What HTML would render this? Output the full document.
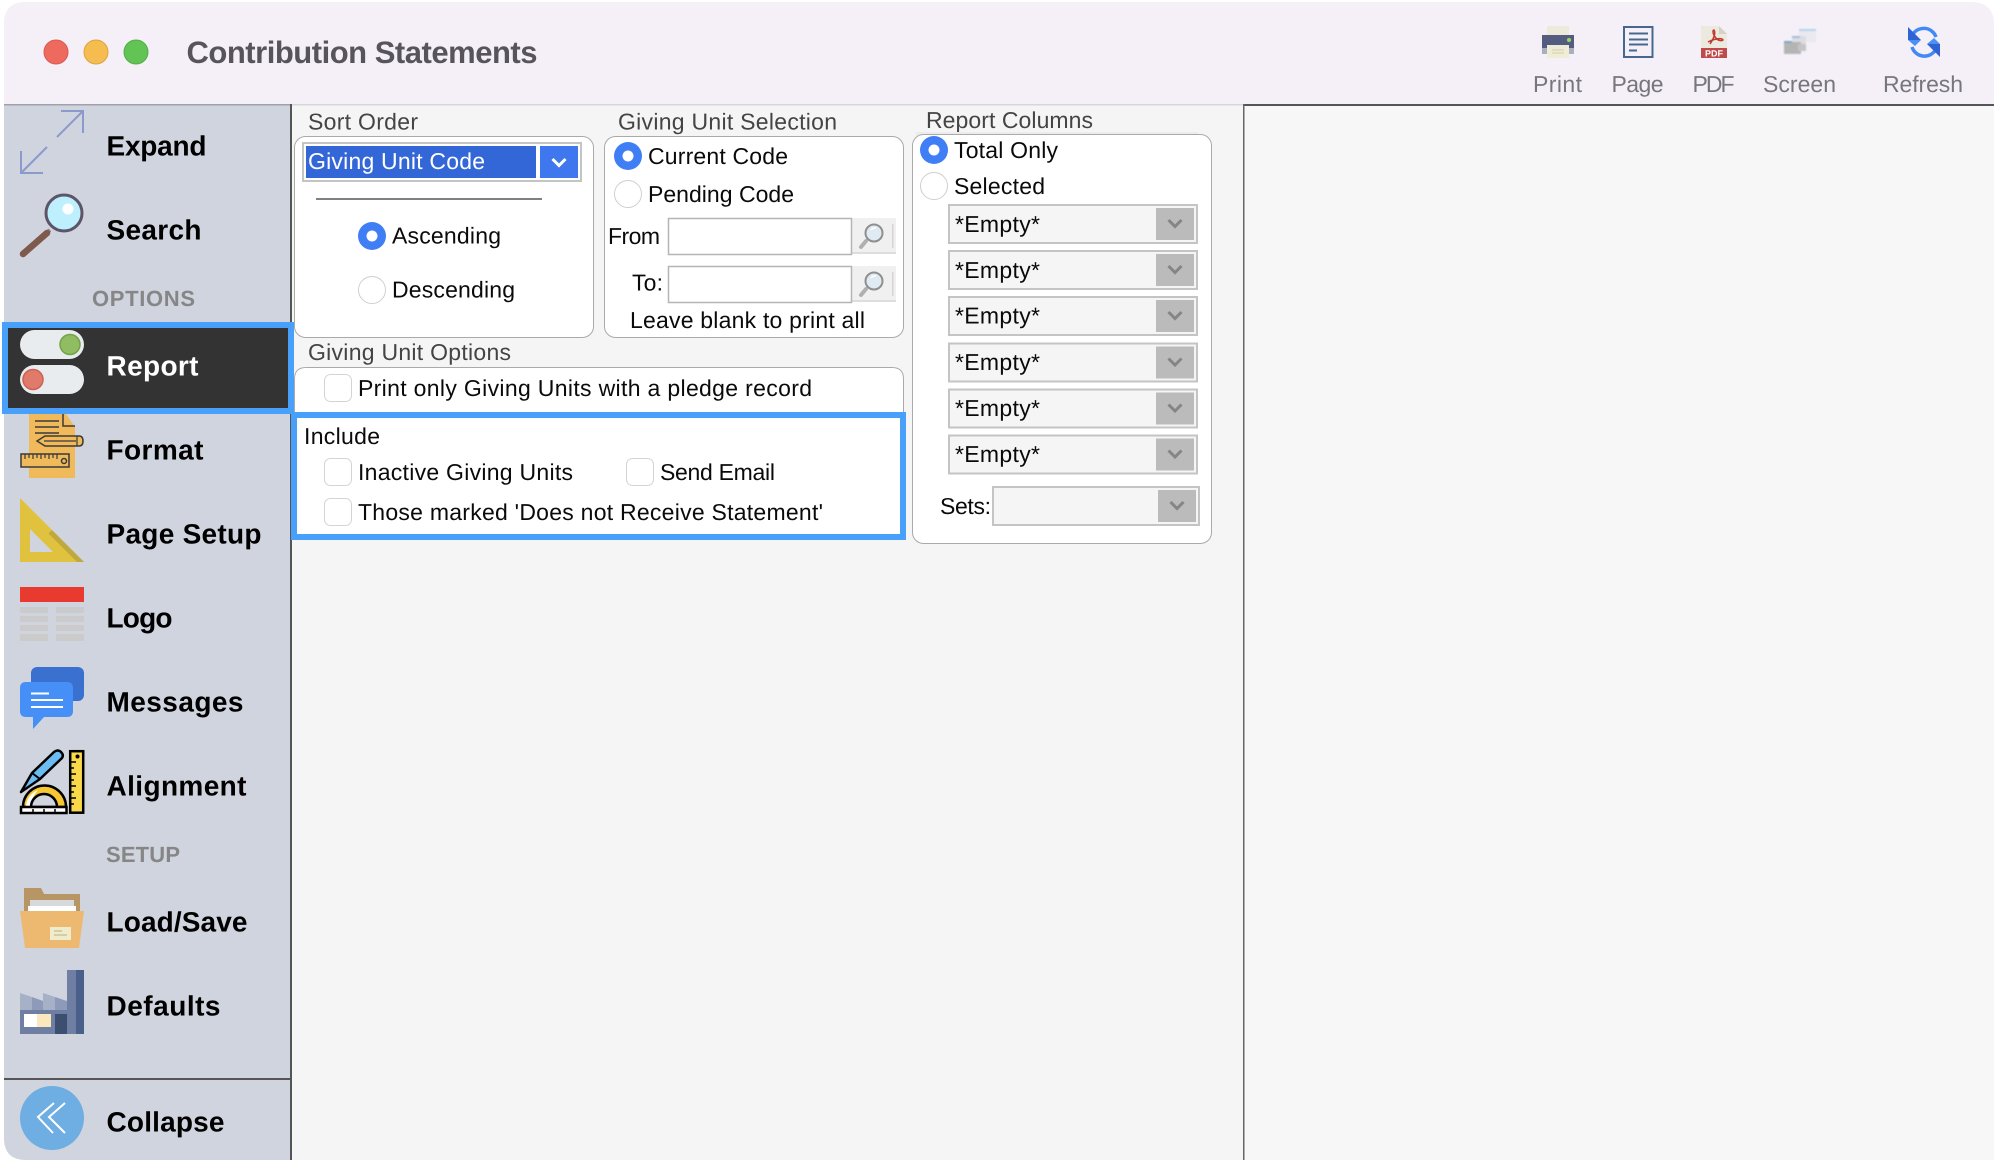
<!DOCTYPE html>
<html><head><meta charset="utf-8"><title>Contribution Statements</title>
<style>
html,body{margin:0;padding:0;background:#fff;width:1994px;height:1160px;overflow:hidden}
svg{display:block}
text{font-family:"Liberation Sans",Arial,sans-serif;font-size:23px;fill:#0a0a0a;text-rendering:geometricPrecision}
.s{font-size:28px;font-weight:700;fill:#000}
.h{font-size:22px;font-weight:700;fill:#868686}
.l{fill:#444}
.t{fill:#77777b}
</style></head><body>
<svg width="1994" height="1160" viewBox="0 0 1994 1160" xmlns="http://www.w3.org/2000/svg">
<defs>
<clipPath id="win"><path d="M4 24Q4 2 26 2H1970Q1994 2 1994 24V1160H26Q4 1160 4 1138Z"/></clipPath>
<filter id="b"><feGaussianBlur stdDeviation="0.7"/></filter>
<g id="chk"><rect x="0.5" y="0.5" width="27" height="27" rx="6" fill="#fff" stroke="#d4d4d4"/></g>
<g id="off"><circle r="13.5" fill="#fff" stroke="#cfcfcf"/></g>
<g id="on"><circle r="14" fill="#3f7ef5"/><circle r="5.5" fill="#fff"/></g>
<g id="dd"><rect x="1" y="1" width="248" height="38" fill="#f5f5f5" stroke="#c4c4c4" stroke-width="2"/><rect x="208" y="4" width="38" height="32" fill="#bbb"/><path d="M220.500 16L227 22.500 233.500 16" fill="none" stroke="#858585" stroke-width="3"/></g>
<g id="mag"><rect x="0" y="0" width="44" height="36" fill="#f0f0f0"/><rect x="0" y="34" width="44" height="2" fill="#ddd"/><rect x="40" y="6" width="1.500" height="24" fill="#d5d5d5"/><path d="M14 23L9 29" stroke="#b0b0b0" stroke-width="4" stroke-linecap="round"/><circle cx="22" cy="15" r="8.500" fill="#dfeaf3" stroke="#8f8f8f" stroke-width="2"/><path d="M19 12A5 5 0 0 1 24 10" fill="none" stroke="#fff" stroke-width="1.500"/></g>
</defs>
<g clip-path="url(#win)">
<rect x="0" y="0" width="1994" height="1160" fill="#f5f5f5"/>
<rect x="0" y="0" width="1994" height="104" fill="#f5f0f8"/>
<rect x="1243" y="104" width="751" height="1056" fill="#f7f7f7"/>
<rect x="292" y="104" width="951" height="1.500" fill="#d8d5da"/>
<rect x="1243" y="104" width="751" height="2" fill="#555"/>
<rect x="1243" y="104" width="1.500" height="1056" fill="#666"/>
<rect x="0" y="105" width="290" height="1055" fill="#d0d4de"/>
<rect x="0" y="104" width="290" height="1.500" fill="#a0a2aa"/>
<rect x="290" y="104" width="2" height="1056" fill="#555"/>
<rect x="0" y="1078" width="290" height="2" fill="#555"/>
</g>

<!-- title bar -->
<circle cx="56" cy="52" r="12" fill="#ee6a5f" stroke="#d9584e"/>
<circle cx="96" cy="52" r="12" fill="#f5bd4f" stroke="#dea43a"/>
<circle cx="136" cy="52" r="12" fill="#61c454" stroke="#52ad46"/>
<text x="186.500" y="63" textLength="351" style="font-size:31px;font-weight:700;fill:#58555a">Contribution Statements</text>

<!-- toolbar icons -->
<g>
<rect x="1547" y="26" width="22" height="10" fill="#ecead9"/>
<rect x="1542" y="47" width="32" height="7" fill="#a9b0bd"/>
<rect x="1542" y="35" width="32" height="13" fill="#545d80"/>
<rect x="1547" y="45" width="22" height="13" fill="#efedd6"/>
<path d="M1552 50H1564M1552 53H1564" stroke="#d3d0a8"/>
<circle cx="1569" cy="40" r="2" fill="#90dc60"/>
<rect x="1624" y="27" width="28.500" height="30" fill="none" stroke="#46678f" stroke-width="2"/>
<path d="M1629 33.500H1648M1629 39.500H1648M1629 44.500H1648M1629 50.500H1637" stroke="#46678f" stroke-width="2"/>
<path d="M1701 26H1719L1727 34V58H1701Z" fill="#ece9df"/><path d="M1719 26V34H1727Z" fill="#d5d2c6"/>
<rect x="1701" y="48" width="26" height="10" fill="#c0494a"/>
<text x="1714" y="56.500" text-anchor="middle" style="font-size:9px;font-weight:700;fill:#fff">PDF</text>
<path d="M1710 44C1714 38 1716 33 1714 30C1712 30 1713 35 1716 38C1718 41 1722 41 1723 40C1722 38 1716 38 1708 42" fill="none" stroke="#c0392f" stroke-width="1.500"/>
<g filter="url(#b)">
<rect x="1799" y="30" width="17" height="12" fill="#e9e9ee"/><rect x="1799" y="29" width="17" height="2" fill="#b4d2ee"/>
<rect x="1792" y="36" width="14" height="10" fill="#dcdde2"/><rect x="1792" y="36" width="8" height="2" fill="#9ebcdc"/>
<rect x="1784" y="42" width="17" height="12" fill="#b4b4b4"/><rect x="1784" y="41" width="8" height="2" fill="#7fa4c8"/>
<rect x="1798" y="44" width="8" height="7" fill="#c4c4c4"/>
</g>
<path d="M1913 34A13 13 0 0 1 1936 37M1936 49A13 13 0 0 1 1912 47" fill="none" stroke="#3f8af5" stroke-width="3.500"/>
<path d="M1908 27V40H1921Z" fill="#2f63d2"/><path d="M1908 40L1921 40 1915 46Z" fill="#4a90f5"/>
<path d="M1940 57V44H1927Z" fill="#2f63d2"/><path d="M1927 44H1940L1934 38Z" fill="#4a90f5"/>
</g>
<text class="t" x="1533" y="92" textLength="49">Print</text>
<text class="t" x="1611.500" y="92" textLength="52">Page</text>
<text class="t" x="1692.500" y="92" textLength="42">PDF</text>
<text class="t" x="1763" y="92" textLength="73">Screen</text>
<text class="t" x="1883" y="92" textLength="80">Refresh</text>

<!-- sidebar icons -->
<path d="M57 137L83 111M61 111H83V133M47 147L21 173M21 151V173H43" fill="none" stroke="#8c9acb" stroke-width="2"/>
<path d="M50 230L44 235" stroke="#8a8794" stroke-width="4"/>
<path d="M47 233L23 254" stroke="#7d5a4c" stroke-width="6.500" stroke-linecap="round"/>
<circle cx="64" cy="213" r="18" fill="#bdf0fc" stroke="#5c5468" stroke-width="3"/>
<circle cx="68" cy="209" r="5.500" fill="#fff"/>

<!-- Format icon -->
<path d="M29 410H63L75 427V478H29Z" fill="#f0b95a"/>
<path d="M63 412V426H75" fill="none" stroke="#3a3a3a" stroke-width="1.500"/>
<path d="M35 421H59M35 427H59M35 433H59" stroke="#3a3a3a" stroke-width="1.500"/>
<path d="M37 441L45 436H79Q83 436 83 441Q83 446 79 446H45Z" fill="#f0b95a" stroke="#3a3a3a" stroke-width="1.500"/>
<path d="M44 441H76M77 436V446" stroke="#3a3a3a" stroke-width="1.200"/>
<rect x="21" y="454" width="48" height="13" fill="#f0b95a" stroke="#3a3a3a" stroke-width="1.500"/>
<path d="M25 454V459M29 454V458M33 454V459M37 454V458M41 454V459M45 454V458M49 454V459M53 454V458M57 454V459" stroke="#3a3a3a" stroke-width="1.200"/>
<circle cx="64" cy="461" r="2.500" fill="none" stroke="#3a3a3a" stroke-width="1.500"/>

<!-- Report item -->
<rect x="5" y="325" width="286" height="86" fill="#333" stroke="#48a0fa" stroke-width="6"/>
<rect x="20" y="330" width="64" height="29" rx="14.500" fill="#e8ecef"/>
<circle cx="70" cy="344.500" r="10" fill="#90bc62" stroke="#72a345" stroke-width="1.500"/>
<rect x="20" y="365" width="64" height="29" rx="14.500" fill="#e8ecef"/>
<circle cx="33" cy="379.500" r="10" fill="#e07a6a" stroke="#cc6253" stroke-width="1.500"/>

<!-- Page setup -->
<path d="M20 498L84 562H20Z" fill="#e0c23f"/><path d="M20 498L84 562H77L20 505Z" fill="#bfa83e" opacity=".0"/><path d="M24 498L84 558V562H80L20 502Z" fill="#c4ad40" opacity="0"/>
<path d="M52 530L84 562H77L48.500 533.500Z" fill="#bfa83e"/>
<path d="M30 529L53 552H30Z" fill="#d0d4de"/>

<!-- Logo -->
<rect x="20" y="587" width="64" height="15" fill="#e83a2e"/>
<g fill="#cbcbcb"><rect x="20" y="607" width="28" height="6"/><rect x="56" y="607" width="28" height="6"/><rect x="20" y="616" width="28" height="6"/><rect x="56" y="616" width="28" height="6"/><rect x="20" y="625" width="28" height="6"/><rect x="56" y="625" width="28" height="6"/><rect x="20" y="634" width="28" height="7"/><rect x="56" y="634" width="28" height="7"/></g>

<!-- Messages -->
<rect x="31" y="667" width="53" height="34" rx="6" fill="#3a71d1"/>
<path d="M26 682H67Q73 682 73 688V711Q73 717 67 717H44L33 729V717H26Q20 717 20 711V688Q20 682 26 682Z" fill="#458ff6"/>
<path d="M31 693.500H49M31 700H63M31 707H63" stroke="#fff" stroke-width="2"/>

<!-- Alignment -->
<rect x="70.200" y="751.200" width="13" height="61.500" fill="#f9d84a" stroke="#000" stroke-width="2.500"/>
<circle cx="77.500" cy="756.500" r="2" fill="#000"/>
<path d="M70 762H76M70 768H74M70 774H76M70 780H74M70 786H76M70 792H74M70 798H76M70 804H74" stroke="#000" stroke-width="1.500"/>
<path d="M21 792L32 773 54 752Q58 749 61 752 64 755 62 758L40 779Z" fill="#6cbcf2" stroke="#000" stroke-width="2.500" stroke-linejoin="round"/>
<path d="M32 773L40 779" stroke="#000" stroke-width="2"/>
<path d="M23 807A21.500 21.500 0 0 1 66 807Z" fill="#f7c633" stroke="#000" stroke-width="2.500"/>
<path d="M26 806A18.500 18.500 0 0 1 38 790 26 26 0 0 0 31 806Z" fill="#fff"/>
<path d="M31 807A13 13 0 0 1 57 807Z" fill="#d0d4de" stroke="#000" stroke-width="2.500"/>
<rect x="21" y="807" width="45.500" height="6" fill="#fff" stroke="#000" stroke-width="2.500"/>
<path d="M33 809V813M44 809V813M55 809V813" stroke="#000" stroke-width="1.500"/>

<!-- Load/save -->
<path d="M24 888H41L44 894H80V935H24Z" fill="#b79565"/>
<rect x="30" y="900" width="44" height="10" fill="#d7dadc"/>
<rect x="28" y="906" width="48" height="10" fill="#fff"/>
<path d="M20 911H84L79 948H25Z" fill="#edb971"/>
<rect x="50" y="927" width="21" height="13" fill="#f0eccb"/>
<path d="M54 931H62M54 935H67" stroke="#c9c49d" stroke-width="1.500"/>

<!-- Defaults -->
<rect x="67" y="970" width="9" height="64" fill="#6f7fa3"/>
<rect x="76" y="970" width="8" height="64" fill="#4a5f8a"/>
<path d="M20 993L32 997V1010H20Z" fill="#a6b1c8"/><path d="M32 997L43 1001V1010H32Z" fill="#8d9aba"/>
<path d="M43 993L55 997V1010H43Z" fill="#a6b1c8"/><path d="M55 997L67 1001V1010H55Z" fill="#8d9aba"/>
<rect x="20" y="1010" width="47" height="24" fill="#6f7fa3"/>
<rect x="24" y="1014" width="13" height="13" fill="#fff"/>
<rect x="37" y="1014" width="14" height="13" fill="#fbe8bd"/>
<rect x="55" y="1014" width="12" height="20" fill="#3d4f70"/>

<!-- Collapse -->
<circle cx="52" cy="1118" r="32" fill="#6eaee2"/>
<path d="M54 1103L38 1117 53 1133M65 1103L49 1117 65 1133" fill="none" stroke="#fff" stroke-width="2"/>

<!-- sidebar text -->
<text class="s" x="106.500" y="155.500" textLength="100">Expand</text>
<text class="s" x="106.500" y="239.500" textLength="95">Search</text>
<text class="h" x="92" y="306" textLength="103">OPTIONS</text>
<text class="s" x="106.500" y="375.500" textLength="92" style="fill:#fff">Report</text>
<text class="s" x="106.500" y="459.500" textLength="97">Format</text>
<text class="s" x="106.500" y="543.500" textLength="155">Page Setup</text>
<text class="s" x="106.500" y="627.500" textLength="66">Logo</text>
<text class="s" x="106.500" y="711.500" textLength="137">Messages</text>
<text class="s" x="106.500" y="795.500" textLength="140">Alignment</text>
<text class="h" x="106" y="862" textLength="74">SETUP</text>
<text class="s" x="106.500" y="931.500" textLength="141">Load/Save</text>
<text class="s" x="106.500" y="1015.500" textLength="114">Defaults</text>
<text class="s" x="106.500" y="1131.500" textLength="118">Collapse</text>

<!-- Sort Order -->
<text class="l" x="308" y="129.500" textLength="110">Sort Order</text>
<rect x="294.500" y="136.500" width="299" height="201" rx="11" fill="#fff" stroke="#aaa"/>
<rect x="303" y="143" width="278" height="38" fill="#fff" stroke="#c4c4c4" stroke-width="2"/>
<rect x="306" y="146" width="230" height="32" fill="#3366d6"/>
<rect x="540" y="146" width="38" height="32" fill="#3f78ee"/>
<path d="M552.500 159L559 165.500 565.500 159" fill="none" stroke="#fff" stroke-width="3"/>
<text x="308" y="169" textLength="177" style="fill:#fff">Giving Unit Code</text>
<rect x="316" y="198" width="226" height="2" fill="#808080"/>
<use href="#on" x="372" y="236"/>
<text x="392" y="243.500" textLength="109">Ascending</text>
<use href="#off" x="372" y="290"/>
<text x="392" y="297.500" textLength="123">Descending</text>

<!-- Giving Unit Selection -->
<text class="l" x="618" y="129.500" textLength="219">Giving Unit Selection</text>
<rect x="604.500" y="136.500" width="299" height="201" rx="11" fill="#fff" stroke="#aaa"/>
<use href="#on" x="628" y="156"/>
<text x="648" y="164" textLength="140">Current Code</text>
<use href="#off" x="628" y="194"/>
<text x="648" y="202" textLength="146">Pending Code</text>
<text x="608" y="244" textLength="52">From</text>
<use href="#mag" x="852" y="218"/>
<rect x="668.500" y="218.500" width="183" height="36" fill="#fff" stroke="#b5b5b5" stroke-width="1.500"/>
<text x="632" y="290.500" textLength="31">To:</text>
<use href="#mag" x="852" y="266"/>
<rect x="668.500" y="266.500" width="183" height="36" fill="#fff" stroke="#b5b5b5" stroke-width="1.500"/>
<text x="630" y="328" textLength="235">Leave blank to print all</text>

<!-- Report columns -->
<text class="l" x="926" y="128" textLength="167">Report Columns</text>
<rect x="916" y="132" width="282" height="4" fill="#ececec"/>
<rect x="912.500" y="134.500" width="299" height="409" rx="11" fill="#fff" stroke="#aaa"/>
<use href="#on" x="934" y="150"/>
<text x="954" y="158" textLength="104">Total Only</text>
<use href="#off" x="934" y="186"/>
<text x="954" y="194" textLength="91">Selected</text>
<use href="#dd" x="948" y="204"/><text x="955" y="232" textLength="85">*Empty*</text>
<use href="#dd" x="948" y="250"/><text x="955" y="278" textLength="85">*Empty*</text>
<use href="#dd" x="948" y="296"/><text x="955" y="323.500" textLength="85">*Empty*</text>
<use href="#dd" x="948" y="342.500"/><text x="955" y="370" textLength="85">*Empty*</text>
<use href="#dd" x="948" y="388.500"/><text x="955" y="416" textLength="85">*Empty*</text>
<use href="#dd" x="948" y="434.500"/><text x="955" y="462" textLength="85">*Empty*</text>
<text x="940" y="514" textLength="51">Sets:</text>
<rect x="993" y="487" width="206" height="38" fill="#f5f5f5" stroke="#c4c4c4" stroke-width="2"/>
<rect x="1158" y="490" width="38" height="32" fill="#bbb"/>
<path d="M1170.500 502L1177 508.500 1183.500 502" fill="none" stroke="#858585" stroke-width="3"/>

<!-- Giving Unit Options -->
<text class="l" x="308" y="360" textLength="203">Giving Unit Options</text>
<path d="M294.500 420V379Q294.500 367.500 306 367.500H892Q903.500 367.500 903.500 379V420" fill="#fff" stroke="#aaa"/>
<use href="#chk" x="324" y="374"/>
<text x="358" y="396" textLength="454">Print only Giving Units with a pledge record</text>
<rect x="294" y="415" width="609" height="122" fill="#fff" stroke="#48a0fa" stroke-width="6"/>
<text x="304" y="444" textLength="76">Include</text>
<use href="#chk" x="324" y="458"/>
<text x="358" y="480" textLength="215">Inactive Giving Units</text>
<use href="#chk" x="626" y="458"/>
<text x="660" y="480" textLength="115">Send Email</text>
<use href="#chk" x="324" y="498"/>
<text x="358" y="520" textLength="465">Those marked 'Does not Receive Statement'</text>
</svg>
</body></html>
